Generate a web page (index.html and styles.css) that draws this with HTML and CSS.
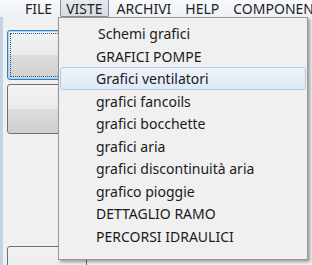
FILE: index.html
```html
<!DOCTYPE html>
<html>
<head>
<meta charset="utf-8">
<link rel="stylesheet" href="styles.css">
</head>
<body>
<div class="window">
  <div class="menubar">
    <span class="mitem">FILE</span>
    <span class="mitem active">VISTE</span>
    <span class="mitem">ARCHIVI</span>
    <span class="mitem">HELP</span>
    <span class="mitem">COMPONENTI</span>
  </div>
  <div class="client">
    <button class="btn focused"><span class="focus-ring"></span></button>
    <button class="btn"></button>
    <button class="btn last"></button>
  </div>
  <div class="dropdown">
    <div class="ditem first">Schemi grafici</div>
    <div class="ditem">GRAFICI POMPE</div>
    <div class="ditem hover">Grafici ventilatori</div>
    <div class="ditem">grafici fancoils</div>
    <div class="ditem">grafici bocchette</div>
    <div class="ditem">grafici aria</div>
    <div class="ditem">grafici discontinuità aria</div>
    <div class="ditem">grafico pioggie</div>
    <div class="ditem">DETTAGLIO RAMO</div>
    <div class="ditem">PERCORSI IDRAULICI</div>
  </div>
</div>
</body>
</html>
```
FILE: styles.css
```css
* { box-sizing: border-box; }
html, body { margin: 0; padding: 0; }
body {
  width: 312px;
  height: 265px;
  overflow: hidden;
  background: #f0f0f0;
  font-family: "Noto Sans", "Open Sans", sans-serif;
  font-size: 14px;
  color: #1a1a1a;
}
.window {
  position: relative;
  width: 312px;
  height: 265px;
  overflow: hidden;
}
.menubar {
  height: 17px;
  display: flex;
  align-items: stretch;
  padding-left: 19px;
  background: linear-gradient(#f7f9fc, #eef1f6);
  white-space: nowrap;
}
.mitem {
  display: flex;
  align-items: center;
  padding: 0 5px;
  margin-right: 2px;
  line-height: 17px;
  color: #222;
  border: 1px solid transparent;
  border-top: 0;
}
.mitem.active {
  background: linear-gradient(#e6e9ef, #d7dce5);
  border-color: #8e8f8f;
  border-radius: 0 0 2px 2px;
}
.client {
  height: 248px;
  display: flex;
  flex-direction: column;
  align-items: flex-start;
  padding: 13px 0 0 4px;
  border-left: 3px solid #c3d2e4;
  background: #f0f0f0;
}
.btn {
  position: relative;
  flex-shrink: 0;
  width: 80px;
  height: 50px;
  margin: 0 0 4px 0;
  padding: 0;
  border: 1px solid #707070;
  border-radius: 3px;
  background: linear-gradient(#f2f2f2 0%, #ebebeb 50%, #dddddd 50%, #cfcfcf 100%);
}
.btn.focused {
  border-color: #3c7fb1;
  box-shadow: inset 0 0 0 1px #a8d5f5;
}
.focus-ring {
  position: absolute;
  inset: 2px;
  border: 1px dotted #1a5fa0;
}
.btn.last { margin-top: 108px; }
.dropdown {
  position: absolute;
  left: 58px;
  top: 17px;
  width: 250px;
  height: 243px;
  padding: 4px 1px 3px;
  background: #f0f0f0;
  border: 1px solid #979797;
  box-shadow: 2px 2px 3px rgba(0,0,0,0.35);
}
.ditem {
  height: 22.5px;
  line-height: 21px;
  padding-left: 35px;
  border: 1px solid transparent;
  border-radius: 3px;
  white-space: nowrap;
}
.ditem.first { padding-left: 37px; }
.ditem.hover {
  border-color: #b4c8e8;
  background: linear-gradient(#eef3fb, #dfe8f7);
}
```
